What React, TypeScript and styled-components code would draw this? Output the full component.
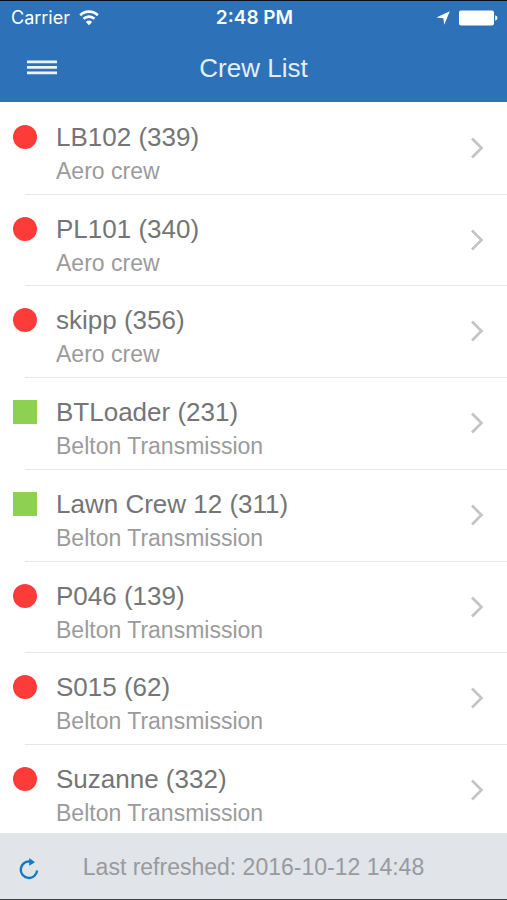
import React from "react";
import styled, { createGlobalStyle } from "styled-components";

const GlobalStyle = createGlobalStyle`
  *, *::before, *::after { box-sizing: border-box; }
  body { margin: 0; background: #fff; font-family: "Liberation Sans", Arial, sans-serif; }
`;

const Screen = styled.div`
  display: flex;
  flex-direction: column;
  min-height: 100vh;
  border-top: 1px solid #05101c;
  border-bottom: 1px solid #3f4245;
`;

const Header = styled.header`
  background: #2d72b8;
  color: #fff;
`;

const StatusBar = styled.div`
  display: grid;
  grid-template-columns: 1fr auto 1fr;
  align-items: center;
  height: 34px;
  padding: 0 9px 0 11px;
  font-family: "Inter", sans-serif;
  font-size: 18px;
  line-height: 24px;
`;

const StatusGroup = styled.div<{ $end?: boolean }>`
  display: flex;
  align-items: center;
  gap: 9px;
  justify-content: ${(p) => (p.$end ? "flex-end" : "flex-start")};
`;

const Clock = styled.time`
  font-size: 19px;
  font-weight: 600;
`;

const NavBar = styled.div`
  display: grid;
  grid-template-columns: 1fr auto 1fr;
  align-items: center;
  height: 67px;
  padding: 0 24px 2px;
`;

const IconButton = styled.button`
  display: flex;
  justify-self: start;
  padding: 3px;
  border: 0;
  background: none;
  color: inherit;
  cursor: pointer;
`;

const Title = styled.h1`
  margin: 0;
  font-size: 26px;
  line-height: 32px;
  font-weight: 400;
  color: #e3eefa;
`;

const List = styled.ul`
  display: flex;
  flex: 1;
  flex-direction: column;
  margin: 0;
  padding: 1px 0 0;
  list-style: none;
`;

const Item = styled.li`
  display: flex;
  flex: 1 0 auto;
  min-height: 88px;
  &:last-child { flex-grow: 0; }
`;

const RowButton = styled.button`
  display: grid;
  grid-template-columns: 24px 1fr auto;
  column-gap: 19px;
  align-items: start;
  width: 100%;
  padding: 19px 23px 0 13px;
  border: 0;
  background: linear-gradient(#e6e6e7, #e6e6e7) 25px 100% / 100% 1px no-repeat;
  font: inherit;
  text-align: left;
  cursor: pointer;
  ${Item}:last-child & { background: none; }
`;

const Marker = styled.span<{ $active: boolean }>`
  width: 24px;
  height: 24px;
  margin-top: 3px;
  border-radius: ${(p) => (p.$active ? "0" : "50%")};
  background: ${(p) => (p.$active ? "#8ed04f" : "#fd3c39")};
`;

const Labels = styled.span`
  display: flex;
  flex-direction: column;
  gap: 3px;
`;

const Name = styled.span`
  font-size: 26px;
  line-height: 30px;
  color: #757577;
`;

const Group = styled.span`
  font-size: 23px;
  line-height: 32px;
  color: #9b9b9d;
`;

const Chevron = styled.svg`
  margin-top: 15px;
`;

const Footer = styled.footer`
  display: grid;
  grid-template-columns: 1fr auto 1fr;
  align-items: center;
  height: 66px;
  padding: 2px 16px 0;
  background: #e1e4e9;
  color: #989a9e;
  font-size: 23px;
  line-height: 32px;
`;

type Crew = { name: string; group: string; active: boolean };

const crews: Crew[] = [
  { name: "LB102 (339)", group: "Aero crew", active: false },
  { name: "PL101 (340)", group: "Aero crew", active: false },
  { name: "skipp (356)", group: "Aero crew", active: false },
  { name: "BTLoader (231)", group: "Belton Transmission", active: true },
  { name: "Lawn Crew 12 (311)", group: "Belton Transmission", active: true },
  { name: "P046 (139)", group: "Belton Transmission", active: false },
  { name: "S015 (62)", group: "Belton Transmission", active: false },
  { name: "Suzanne (332)", group: "Belton Transmission", active: false },
];

const WifiIcon = () => (
  <svg width="20" height="16" viewBox="0 0 20 16" fill="none" stroke="#fff" strokeWidth="2.6" aria-hidden="true">
    <path d="M1.2 5.2a12.6 12.6 0 0 1 17.6 0" />
    <path d="M4.5 8.8a8 8 0 0 1 11 0" />
    <path d="M10 15.2 6.9 11.9a4.6 4.6 0 0 1 6.2 0z" fill="#fff" stroke="none" />
  </svg>
);

const LocationIcon = () => (
  <svg width="14" height="14" viewBox="0 0 14 14" fill="#fff" aria-hidden="true">
    <path d="M13.8 0.2 8.2 13.8 7.4 7.2 0.4 6.6z" />
  </svg>
);

const BatteryIcon = () => (
  <svg width="39" height="16" viewBox="0 0 39 16" fill="#fff" aria-hidden="true">
    <rect x="0" y="0.5" width="35" height="15" rx="2" />
    <path d="M36.2 5.2q2.3.8 2.3 2.8t-2.3 2.8z" />
  </svg>
);

export default function App() {
  return (
    <>
      <GlobalStyle />
      <Screen>
        <Header>
          <StatusBar>
            <StatusGroup>
              <span>Carrier</span>
              <WifiIcon />
            </StatusGroup>
            <Clock>2:48 PM</Clock>
            <StatusGroup $end>
              <LocationIcon />
              <BatteryIcon />
            </StatusGroup>
          </StatusBar>
          <NavBar>
            <IconButton aria-label="Menu">
              <svg width="30" height="16" viewBox="0 0 30 16" fill="#e9f4ff" aria-hidden="true">
                <path d="M0 0.4h30v2.8H0zM0 5.9h30v2.8H0zM0 11.4h30v2.8H0z" />
              </svg>
            </IconButton>
            <Title>Crew List</Title>
          </NavBar>
        </Header>
        <List>
          {crews.map((crew) => (
            <Item key={crew.name}>
              <RowButton>
                <Marker $active={crew.active} />
                <Labels>
                  <Name>{crew.name}</Name>
                  <Group>{crew.group}</Group>
                </Labels>
                <Chevron width="14" height="22" viewBox="0 0 14 22" fill="none" stroke="#c4c4c6" strokeWidth="2.6" aria-hidden="true">
                  <path d="M2 1.5 11.5 11 2 20.5" />
                </Chevron>
              </RowButton>
            </Item>
          ))}
        </List>
        <Footer>
          <IconButton aria-label="Refresh">
            <svg width="20" height="26" viewBox="0 0 20 26" fill="none" aria-hidden="true">
              <path d="M11 7.6A8.2 8.2 0 1 0 18.1 16.5" stroke="#1279c4" strokeWidth="2.4" />
              <path d="M10.2 4 16 8.2 10.2 11.8z" fill="#1279c4" />
            </svg>
          </IconButton>
          <span>Last refreshed: 2016-10-12 14:48</span>
        </Footer>
      </Screen>
    </>
  );
}
